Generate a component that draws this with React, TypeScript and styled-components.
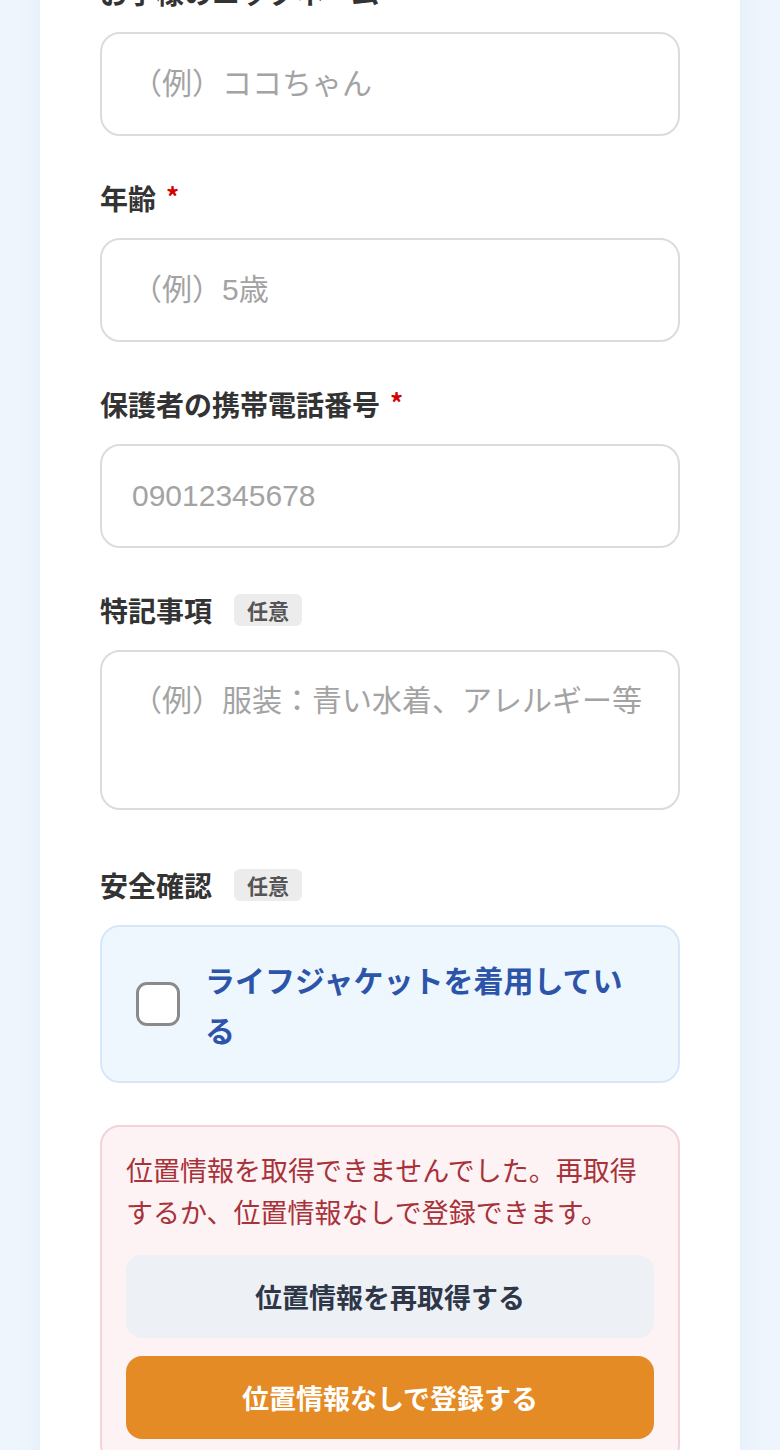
import styled, { createGlobalStyle } from 'styled-components'

const GlobalStyle = createGlobalStyle`
  html, body {
    margin: 0;
    padding: 0;
    background: #eef5fd;
    font-family: "Noto Sans CJK JP", "Noto Sans", sans-serif;
    color: #333333;
  }
  * {
    box-sizing: border-box;
  }
`

// Fields
type FieldProps = {
  label: string
  required?: boolean
  optional?: boolean
  children: React.ReactNode
}

const Field = ({ label, required, optional, children }: FieldProps) => (
  <FieldBox>
    <Label>
      {label}
      {required && <Required>*</Required>}
      {optional && <Badge>任意</Badge>}
    </Label>
    {children}
  </FieldBox>
)

export default function App() {
  return (
    <>
      <GlobalStyle />
      <Page>
        <Card>
          <Form>
            <Field label='お子様のニックネーム' required>
              <Input placeholder='（例）ココちゃん' />
            </Field>
            <Field label='年齢' required>
              <Input placeholder='（例）5歳' />
            </Field>
            <Field label='保護者の携帯電話番号' required>
              <Input placeholder='09012345678' inputMode='tel' />
            </Field>
            <Field label='特記事項' optional>
              <TextArea placeholder='（例）服装：青い水着、アレルギー等' />
            </Field>
            <Field label='安全確認' optional>
              <CheckPanel>
                <CheckBox type='checkbox' />
                <CheckText>ライフジャケットを着用している</CheckText>
              </CheckPanel>
            </Field>
            <ErrorPanel>
              <ErrorText>
                位置情報を取得できませんでした。再取得するか、位置情報なしで登録できます。
              </ErrorText>
              <Button $variant='secondary'>位置情報を再取得する</Button>
              <Button $variant='primary'>位置情報なしで登録する</Button>
            </ErrorPanel>
          </Form>
        </Card>
      </Page>
    </>
  )
}

const Page = styled.div`
  padding: 0 40px;
  margin-top: -28px;
`

const Card = styled.div`
  background: #ffffff;
  box-shadow: 0 0 24px rgba(40, 80, 140, 0.06);
  padding: 0 60px 40px;
`

const Form = styled.div`
  display: flex;
  flex-direction: column;
`

const FieldBox = styled.div`
  display: flex;
  flex-direction: column;
  margin-bottom: 42px;
`

const Label = styled.div`
  display: flex;
  align-items: center;
  height: 40px;
  margin-bottom: 20px;
  font-size: 28px;
  font-weight: 700;
  color: #333333;
`

const Required = styled.span`
  color: #d60000;
  font-size: 26px;
  margin-left: 10px;
  margin-top: -6px;
`

const Badge = styled.span`
  display: inline-flex;
  align-items: center;
  height: 32px;
  padding: 0 13px;
  margin-left: 22px;
  border-radius: 6px;
  background: #ececec;
  color: #555555;
  font-size: 21px;
  font-weight: 700;
`

const Input = styled.input`
  display: block;
  width: 100%;
  height: 104px;
  padding: 0 30px;
  border: 2px solid #dcdcdc;
  border-radius: 20px;
  background: #ffffff;
  font-family: "Liberation Sans", "Noto Sans CJK JP", sans-serif;
  font-size: 30px;
  color: #333333;
  outline: none;
  &::placeholder {
    color: #a3a3a3;
  }
`

const TextArea = styled.textarea`
  display: block;
  width: 100%;
  height: 160px;
  padding: 26px 30px;
  margin-bottom: 13px;
  border: 2px solid #dcdcdc;
  border-radius: 20px;
  background: #ffffff;
  font-family: "Liberation Sans", "Noto Sans CJK JP", sans-serif;
  font-size: 30px;
  line-height: 1.5;
  color: #333333;
  resize: none;
  outline: none;
  &::placeholder {
    color: #a3a3a3;
  }
`

const CheckPanel = styled.label`
  display: flex;
  align-items: center;
  gap: 25px;
  min-height: 158px;
  padding: 27px 34px;
  border: 2px solid #d6e7f8;
  border-radius: 20px;
  background: #eff7fe;
`

const CheckBox = styled.input`
  appearance: none;
  flex: 0 0 auto;
  width: 44px;
  height: 44px;
  margin: 0;
  border: 3px solid #8a8a8a;
  border-radius: 11px;
  background: #ffffff;
`

const CheckText = styled.span`
  font-size: 30px;
  font-weight: 700;
  line-height: 50px;
  color: #2c55a9;
`

const ErrorPanel = styled.div`
  display: flex;
  flex-direction: column;
  gap: 18px;
  padding: 22px 24px 24px;
  border: 2px solid #f2d3d8;
  border-radius: 20px;
  background: #fdf2f4;
`

const ErrorText = styled.p`
  margin: 0 0 4px;
  font-size: 27px;
  line-height: 42px;
  color: #a8323a;
`

const Button = styled.button<{ $variant: 'primary' | 'secondary' }>`
  display: flex;
  align-items: center;
  justify-content: center;
  width: 100%;
  height: 83px;
  border: none;
  border-radius: 16px;
  font-family: inherit;
  font-size: 27px;
  font-weight: 700;
  background: ${(p) => (p.$variant === 'primary' ? '#e58b25' : '#edf0f5')};
  color: ${(p) => (p.$variant === 'primary' ? '#ffffff' : '#2d3748')};
`
